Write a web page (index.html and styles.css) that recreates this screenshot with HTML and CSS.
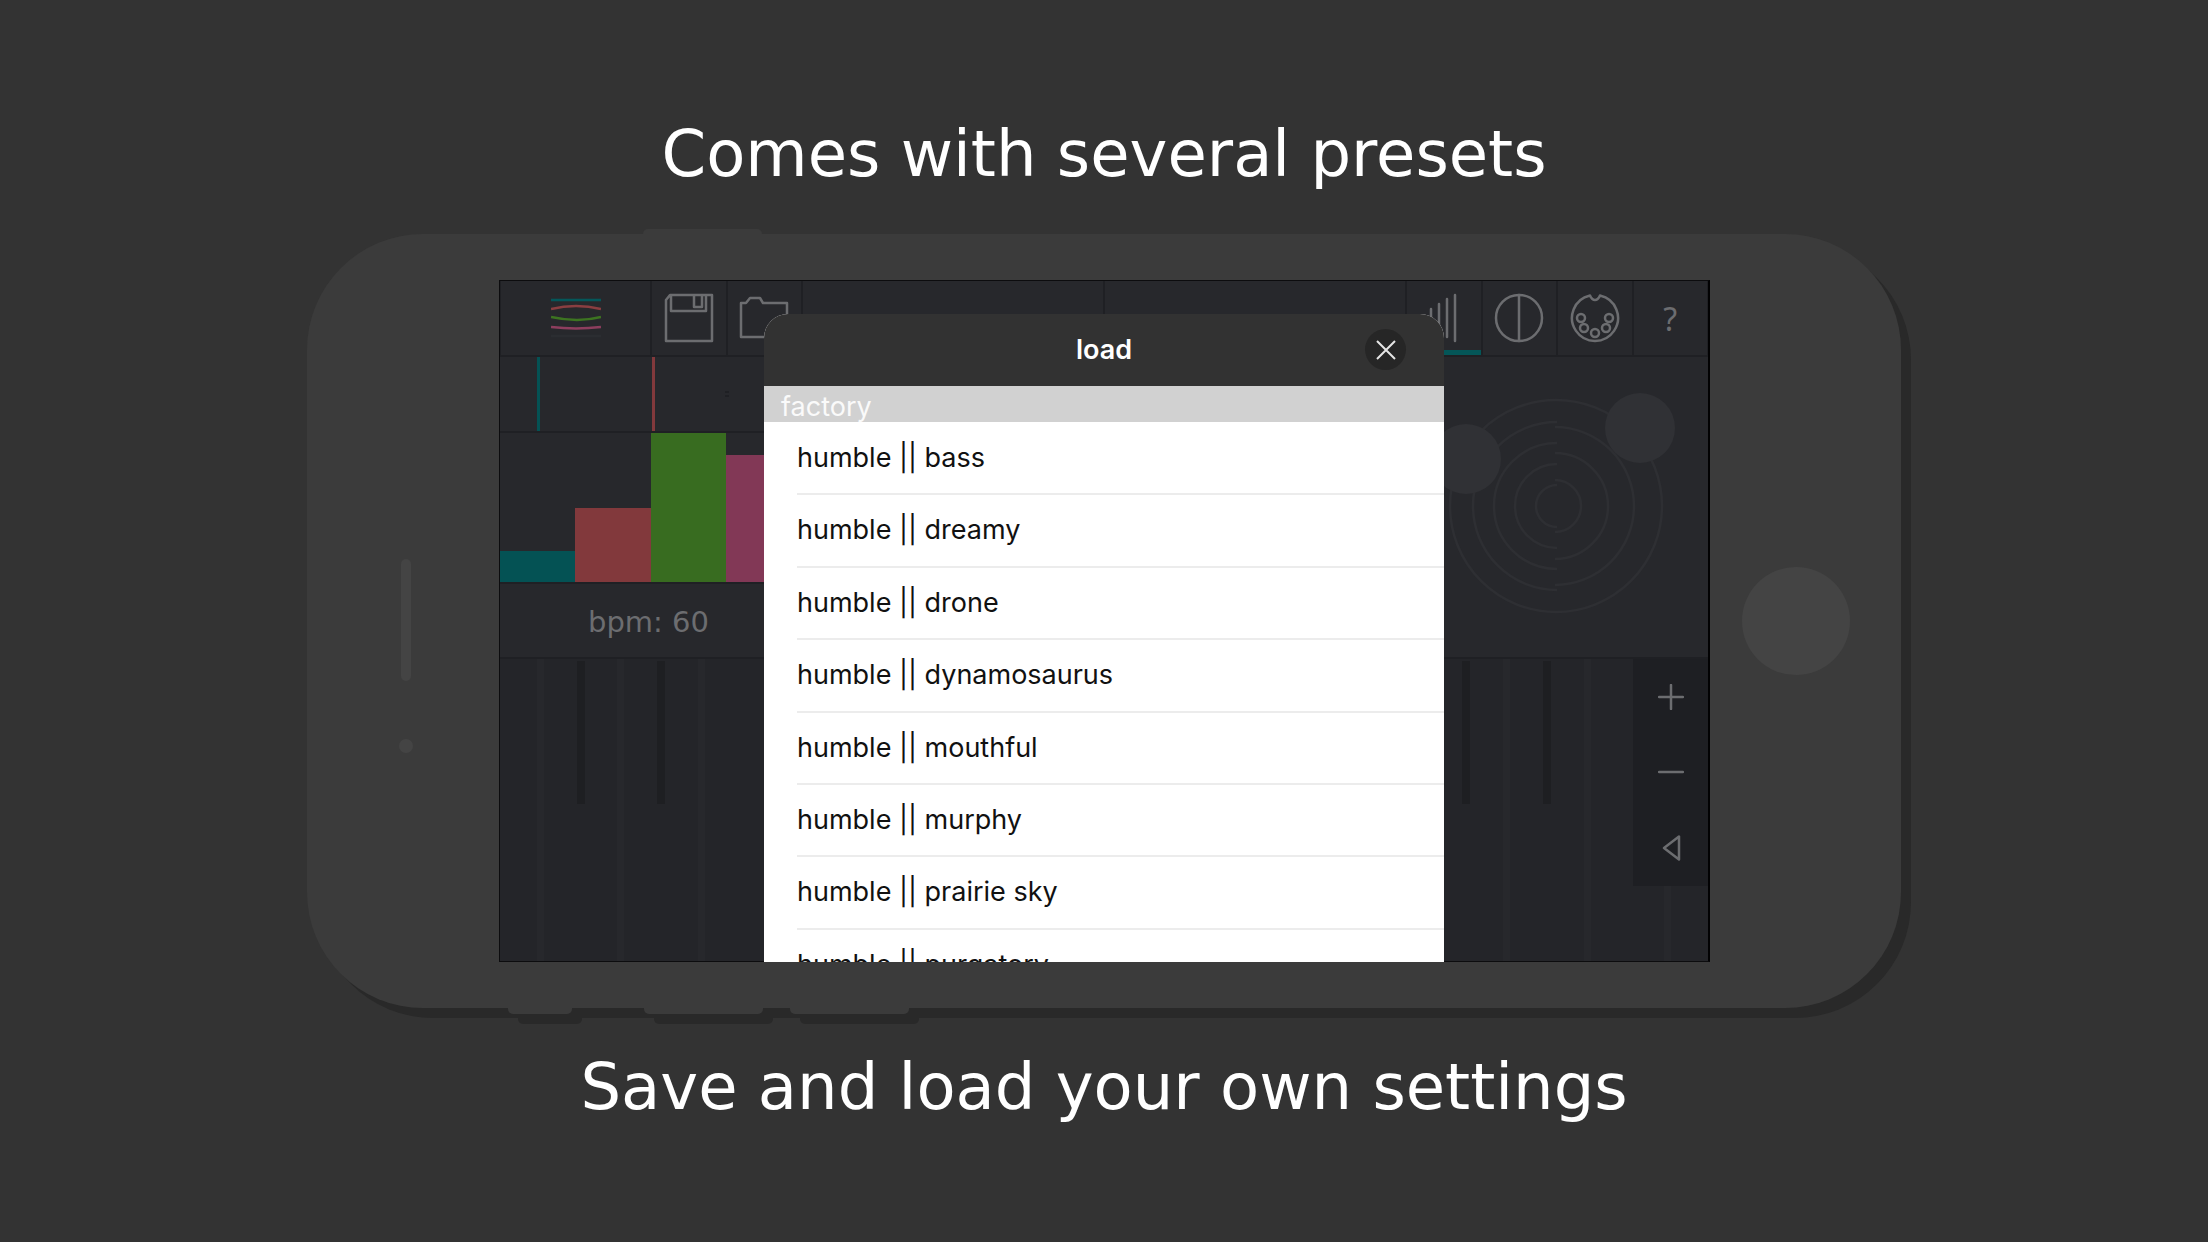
FILE: index.html
```html
<!DOCTYPE html>
<html lang="en">
<head>
    <meta charset="utf-8">
    <title>Presets</title>
    <link rel="stylesheet" href="styles.css">
</head>
<body>

<h1>Comes with several presets</h1>

<main class="phone">
    <div class="buttons-top"><span class="side-button"></span></div>
    <div class="buttons-bottom">
        <span class="side-button small"></span>
        <span class="side-button"></span>
        <span class="side-button"></span>
    </div>

    <div class="bezel-left">
        <div class="speaker"></div>
        <div class="camera"></div>
    </div>

    <div class="screen">
        <nav class="toolbar">
            <button class="cell" aria-label="waves">
                <svg width="50" height="40" viewBox="0 0 50 40" fill="none" stroke-width="2.500">
                    <path d="M0 2h50" stroke="#04575a"/>
                    <path d="M0 11Q25 5 50 11" stroke="#8a3e41"/>
                    <path d="M0 19Q27 25 50 19" stroke="#3d7421"/>
                    <path d="M0 29Q25 32 50 29" stroke="#8d3e5e"/>
                    <path d="M0 38h50" stroke="#2b2d31"/>
                </svg>
            </button>
            <button class="cell" aria-label="save">
                <svg class="icon" width="50" height="50" viewBox="0 0 50 50">
                    <path d="M6 2h42v46H2V7zM7 2v16h35V2M30 2v12h8V2"/>
                </svg>
            </button>
            <button class="cell" aria-label="load">
                <svg class="icon" width="50" height="50" viewBox="0 0 50 50">
                    <path d="M2 10h5l4-5h10l3 5h24v34H2z"/>
                </svg>
            </button>
            <span class="cell"></span>
            <span class="cell"></span>
            <button class="cell active" aria-label="amplitude">
                <svg class="icon" width="50" height="50" viewBox="0 0 50 50">
                    <path d="M12 16v18M20 11v28M28 6v38M36 2v46"/>
                </svg>
            </button>
            <button class="cell" aria-label="balance">
                <svg class="icon" width="50" height="50" viewBox="0 0 50 50">
                    <circle cx="25" cy="25" r="23"/><path d="M25 2v46"/>
                </svg>
            </button>
            <button class="cell" aria-label="midi">
                <svg class="icon" width="50" height="50" viewBox="0 0 50 50">
                    <path d="M30 2.500A23 23 0 1 1 20 2.500Q22 7 25 7T30 2.500"/>
                    <circle cx="11" cy="25" r="4"/><circle cx="39" cy="25" r="4"/>
                    <circle cx="14" cy="35" r="4"/><circle cx="36" cy="35" r="4"/>
                    <circle cx="25" cy="40" r="4"/>
                </svg>
            </button>
            <button class="cell help">?</button>
        </nav>

        <section class="controls">
            <div class="left-panel">
                <div class="sliders">
                    <div class="slider teal"></div>
                    <div class="slider red"></div>
                    <div class="grip"></div>
                </div>
                <div class="bars">
                    <div class="bar teal" style="height:21%"></div>
                    <div class="bar red" style="height:50%"></div>
                    <div class="bar green" style="height:100%"></div>
                    <div class="bar pink" style="height:85%"></div>
                </div>
                <div class="bpm">bpm: 60</div>
            </div>
            <div class="right-panel">
                <svg width="300" height="300" viewBox="2 2 300 300">
                    <g fill="none" stroke="#2e2f33" stroke-width="2.500">
                        <circle cx="151" cy="151" r="106"/>
                        <path d="M152 67a84 84 0 0 0 0 168M152 88a63 63 0 0 0 0 126M152 109a42 42 0 0 0 0 84M152 130a21 21 0 0 0 0 42"/>
                        <path d="M150 72a79 79 0 0 1 0 158M150 98a53 53 0 0 1 0 106M150 125a26 26 0 0 1 0 52"/>
                    </g>
                    <circle cx="235" cy="73" r="35" fill="#303135"/>
                    <circle cx="61" cy="104" r="35" fill="#303135"/>
                </svg>
            </div>
        </section>

        <section class="keyboard">
            <div class="key"></div><div class="key sharp"></div><div class="key sharp"></div>
            <div class="key"></div><div class="key sharp"></div><div class="key sharp"></div>
            <div class="key sharp"></div><div class="key"></div><div class="key sharp"></div>
            <div class="key sharp"></div><div class="key"></div><div class="key"></div>
            <div class="key sharp"></div><div class="key sharp"></div><div class="key"></div>
            <div class="octave">
                <button aria-label="octave up"><svg class="icon" width="26" height="26" viewBox="0 0 26 26"><path d="M13 1v24M1 13h24"/></svg></button>
                <button aria-label="octave down"><svg class="icon" width="26" height="26" viewBox="0 0 26 26"><path d="M1 13h24"/></svg></button>
                <button aria-label="hide"><svg class="icon" width="26" height="26" viewBox="0 0 26 26"><path d="M21 1.500v23L6 13z"/></svg></button>
            </div>
        </section>

        <div class="overlay">
            <div class="dialog" role="dialog" aria-label="load">
                <header>
                    <h2>load</h2>
                    <button class="close" aria-label="close">
                        <svg width="20" height="20" viewBox="0 0 20 20"><path d="M1 1l18 18M19 1L1 19"/></svg>
                    </button>
                </header>
                <h3>factory</h3>
                <ul>
                    <li><a href="#bass">humble || bass</a></li>
                    <li><a href="#dreamy">humble || dreamy</a></li>
                    <li><a href="#drone">humble || drone</a></li>
                    <li><a href="#dynamosaurus">humble || dynamosaurus</a></li>
                    <li><a href="#mouthful">humble || mouthful</a></li>
                    <li><a href="#murphy">humble || murphy</a></li>
                    <li><a href="#prairie-sky">humble || prairie sky</a></li>
                    <li><a href="#purgatory">humble || purgatory</a></li>
                </ul>
            </div>
        </div>
    </div>

    <div class="bezel-right">
        <div class="home"></div>
    </div>
</main>

<p class="caption">Save and load your own settings</p>

</body>
</html>
```

FILE: styles.css
```css
* {
    box-sizing: border-box;
}
body {
    margin: 0;
    background-color: #333333;
    color: white;
    font-family: "DejaVu Sans", Verdana, sans-serif;
}
h1, .caption {
    margin: 0;
    font-size: 64px;
    line-height: 80px;
    font-weight: normal;
    text-align: center;
}
h1 {
    padding: 114px 0 40px;
}
.caption {
    padding-top: 39px;
}
button {
    border: 0;
    padding: 0;
    background: none;
    color: #6c6d70;
    font: inherit;
}
svg {
    display: block;
}
.icon {
    fill: none;
    stroke: #6c6d70;
    stroke-width: 2.5;
    stroke-linejoin: round;
    stroke-linecap: round;
}

/* phone */
.phone {
    position: relative;
    display: flex;
    margin: 0 307px;
    padding: 46px 0;
    border-radius: 116px;
    background-color: #3b3b3b;
    box-shadow: 10px 10px #292929;
}
.buttons-top, .buttons-bottom {
    position: absolute;
    display: flex;
}
.buttons-top {
    left: 336px;
    bottom: 100%;
}
.buttons-bottom {
    left: 201px;
    top: 100%;
}
.side-button {
    width: 119px;
    height: 6px;
    background-color: #3b3b3b;
}
.buttons-top .side-button {
    height: 5px;
    border-radius: 5px 5px 0 0;
}
.buttons-bottom .side-button {
    margin-right: 27px;
    border-radius: 0 0 5px 5px;
    box-shadow: 10px 10px #292929;
}
.buttons-bottom .small {
    width: 64px;
    margin-right: 72px;
}
.bezel-left, .bezel-right {
    display: flex;
    flex-direction: column;
    align-items: center;
}
.bezel-left {
    width: 192px;
    padding: 279px 0 0 6px;
}
.bezel-right {
    width: 191px;
    justify-content: center;
    padding-right: 20px;
}
.speaker {
    width: 10px;
    height: 122px;
    border-radius: 5px;
    background-color: #444444;
}
.camera {
    width: 14px;
    height: 14px;
    margin-top: 58px;
    border-radius: 50%;
    background-color: #444444;
}
.home {
    width: 108px;
    height: 108px;
    border-radius: 50%;
    background-color: #444444;
}

/* app */
.screen {
    position: relative;
    flex: 1;
    border: 1px solid #0c0c0e;
    border-right: 2px solid #020203;
    background-color: #27282c;
}
.toolbar {
    display: grid;
    grid-template-columns: 2fr 1fr 1fr 4fr 4fr 1fr 1fr 1fr 1fr;
    height: 76px;
    border-bottom: 2px solid #1f2024;
}
.cell {
    display: flex;
    align-items: center;
    justify-content: center;
    border: solid #1f2024;
    border-width: 0 1px;
}
.active {
    box-shadow: inset 0 -5px #045658;
}
.help {
    font-family: "Noto Sans", sans-serif;
    font-size: 32px;
}
.controls {
    display: grid;
    grid-template-columns: 3fr 1fr;
}
.left-panel {
    border-right: 2px solid #1f2024;
}
.sliders {
    display: grid;
    grid-template-columns: 115px 73px 1fr;
    height: 76px;
    padding-left: 37px;
    border-bottom: 2px solid #1f2024;
}
.slider {
    width: 3px;
}
.grip {
    align-self: center;
    width: 4px;
    height: 6px;
    border: solid #1f2024;
    border-width: 2px 0;
}
.bars {
    display: grid;
    grid-template-columns: repeat(12, 1fr);
    align-items: end;
    height: 151px;
    border-bottom: 2px solid #1f2024;
}
.teal {
    background-color: #045254;
}
.red {
    background-color: #82393c;
}
.green {
    background-color: #386c20;
}
.pink {
    background-color: #823856;
}
.bpm {
    height: 75px;
    padding-left: 88px;
    border-bottom: 2px solid #1f2024;
    color: #6c6d70;
    font-size: 29px;
    line-height: 77px;
}
.right-panel {
    display: flex;
    align-items: center;
    justify-content: center;
    border-bottom: 2px solid #1f2024;
}
.keyboard {
    position: relative;
    display: grid;
    grid-template-columns: repeat(15, 1fr);
    height: 302px;
    background-color: #242529;
}
.key {
    position: relative;
    background: linear-gradient(#27282c, #27282c) center / 7px 100% no-repeat;
}
.sharp::before {
    content: "";
    position: absolute;
    left: -4px;
    top: 2px;
    width: 8px;
    height: 143px;
    background-color: #1e1f22;
}
.octave {
    position: absolute;
    top: 0;
    right: 0;
    display: grid;
    grid-template-rows: repeat(3, 1fr);
    width: 75px;
    height: 227px;
    background-color: #1e1f23;
}
.octave button {
    display: flex;
    align-items: center;
    justify-content: center;
}

/* preset list */
.overlay {
    position: absolute;
    inset: 33px 264px -1px;
    overflow: hidden;
    border-radius: 24px 24px 0 0;
}
.dialog {
    background-color: white;
    color: black;
    font-family: Inter, sans-serif;
    font-size: 27px;
}
.dialog header {
    position: relative;
    height: 72px;
    background-color: #323232;
    color: white;
}
.dialog h2 {
    margin: 0;
    font-size: 27px;
    line-height: 72px;
    font-weight: 600;
    text-align: center;
}
.close {
    position: absolute;
    top: 15px;
    right: 38px;
    display: flex;
    align-items: center;
    justify-content: center;
    width: 41px;
    height: 41px;
    border-radius: 50%;
    background-color: #262626;
}
.close path {
    stroke: #e6e6e6;
    stroke-width: 2;
}
.dialog h3 {
    margin: 0;
    height: 36px;
    padding-left: 17px;
    background-color: #d1d1d1;
    color: #fafafa;
    font-size: 27px;
    line-height: 41px;
    font-weight: normal;
}
.dialog ul {
    display: grid;
    grid-template-rows: repeat(8, 1fr);
    height: 580px;
    margin: 0;
    padding: 1px 0 0 33px;
    list-style: none;
}
.dialog li {
    border-bottom: 2px solid #ececec;
    line-height: 70px;
}
.dialog a {
    color: #111111;
    text-decoration: none;
}
```
